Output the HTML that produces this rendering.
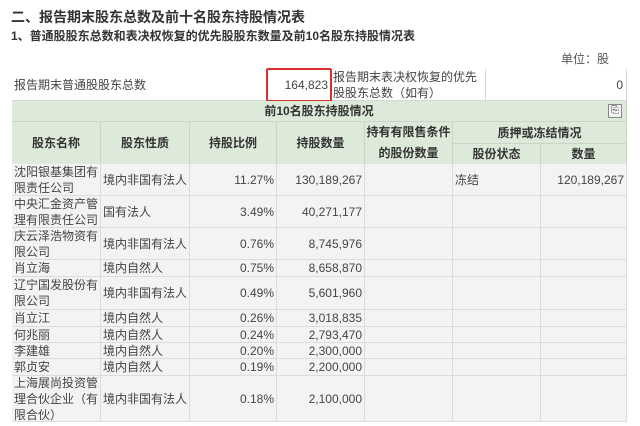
<!DOCTYPE html>
<html><head><meta charset="utf-8"><style>
*{margin:0;padding:0;box-sizing:border-box}
body{width:640px;height:426px;background:#fff;font-family:"Liberation Sans","Noto Sans CJK SC",sans-serif;color:#333;position:relative;overflow:hidden}
.a{position:absolute;font-size:12px;line-height:16px}
.c{position:absolute;border-right:1px solid #d6d6d6;border-bottom:1px solid #d6d6d6;font-size:12px;line-height:16px;display:flex;align-items:center;padding:0 2px;color:#444}
.g{background:#dde9d9;justify-content:center;font-weight:bold;color:#333;border-color:#c9d6c5}
.d{background:#f3f3f3;border-color:#dcdcdc}
.r{justify-content:flex-end}
.w{background:#fff}
</style></head><body>
<div class="a" style="left:11px;top:8px;font-size:14px;font-weight:bold;line-height:18px">二、报告期末股东总数及前十名股东持股情况表</div>
<div class="a" style="left:11px;top:28px;font-weight:bold">1、普通股股东总数和表决权恢复的优先股股东数量及前10名股东持股情况表</div>
<div class="a" style="left:561px;top:51px;color:#555">单位：股</div>
<div style="position:absolute;left:12px;top:69px;width:615px;height:353px;border-left:1px solid #d6d6d6;border-top:1px solid #d6d6d6"></div>
<div class="c w" style="left:12px;top:69px;width:255px;height:32px">报告期末普通股股东总数</div>
<div class="c w r" style="left:267px;top:69px;width:64px;height:32px">164,823</div>
<div class="c w" style="left:331px;top:69px;width:155px;height:32px;align-items:flex-start;padding-top:0">报告期末表决权恢复的优先股股东总数（如有）</div>
<div class="c w r" style="left:486px;top:69px;width:141px;height:32px;padding-right:3px">0</div>
<div style="position:absolute;left:266px;top:68px;width:66px;height:34px;border:2px solid #d9302c;border-radius:2px"></div>
<div class="c g" style="left:12px;top:101px;width:615px;height:21px">前10名股东持股情况</div>
<div style="position:absolute;left:608px;top:104px;width:14px;height:14px;border:1px solid #888;background:#f4f4f4;font-size:10px;line-height:12px;text-align:center">⎘</div>
<div class="c g" style="left:12px;top:122px;width:89px;height:43px">股东名称</div>
<div class="c g" style="left:101px;top:122px;width:89px;height:43px">股东性质</div>
<div class="c g" style="left:190px;top:122px;width:87px;height:43px">持股比例</div>
<div class="c g" style="left:277px;top:122px;width:88px;height:43px">持股数量</div>
<div class="c g" style="left:365px;top:122px;width:88px;height:43px;text-align:center;line-height:21px;padding:0">持有有限售条件的股份数量</div>
<div class="c g" style="left:453px;top:122px;width:174px;height:22px">质押或冻结情况</div>
<div class="c g" style="left:453px;top:144px;width:88px;height:21px">股份状态</div>
<div class="c g" style="left:541px;top:144px;width:86px;height:21px">数量</div>
<div id="rows"></div>
<script>
var R=[[164,196,"沈阳银基集团有限责任公司","境内非国有法人","11.27%","130,189,267","冻结","120,189,267"],
[196,228,"中央汇金资产管理有限责任公司","国有法人","3.49%","40,271,177"],
[228,260,"庆云泽浩物资有限公司","境内非国有法人","0.76%","8,745,976"],
[260,277,"肖立海","境内自然人","0.75%","8,658,870"],
[277,310,"辽宁国发股份有限公司","境内非国有法人","0.49%","5,601,960"],
[310,327,"肖立江","境内自然人","0.26%","3,018,835"],
[327,343,"何兆丽","境内自然人","0.24%","2,793,470"],
[343,359,"李建雄","境内自然人","0.20%","2,300,000"],
[359,376,"郭贞安","境内自然人","0.19%","2,200,000"],
[376,422,"上海展尚投资管理合伙企业（有限合伙）","境内非国有法人","0.18%","2,100,000"]];
var X=[12,101,190,277,365,453,541,627],h="";
R.forEach(function(r){var v=[r[2],r[3],r[4],r[5],"",r[6]||"",r[7]||""];
for(var i=0;i<7;i++){var cl="c d"+((i==2||i==3||i==6)?" r":"");
h+='<div class="'+cl+'" style="left:'+X[i]+'px;top:'+r[0]+'px;width:'+(X[i+1]-X[i])+'px;height:'+(r[1]-r[0])+'px">'+v[i]+'</div>';}});
document.getElementById("rows").innerHTML=h;
</script>
</body></html>
